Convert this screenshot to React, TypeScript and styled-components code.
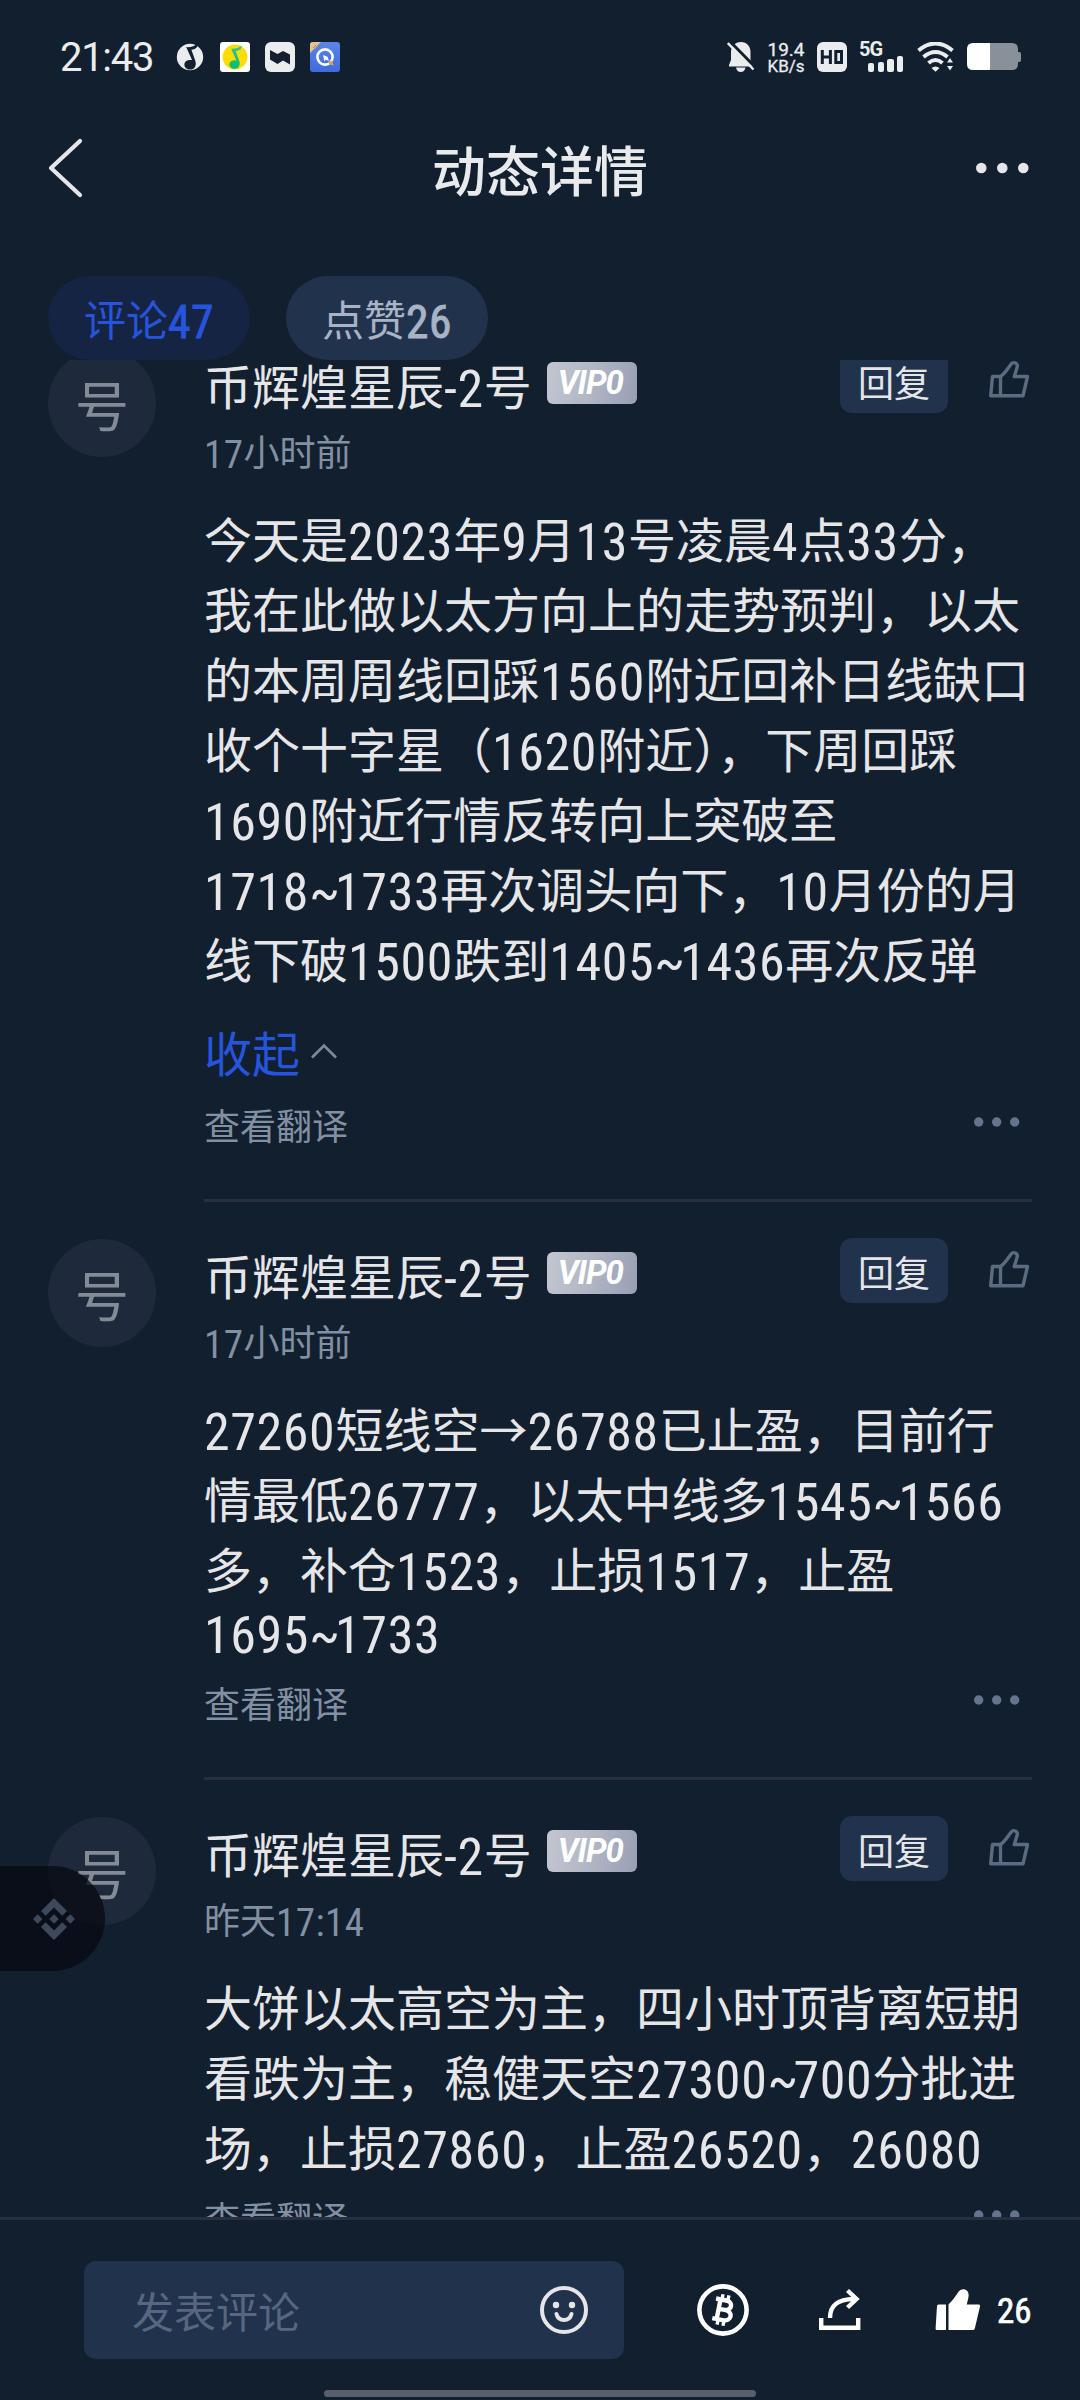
import React from 'react';
import styled, { createGlobalStyle, css } from 'styled-components';

const cjk = `"Noto Sans CJK SC", sans-serif`;
const latin = `"Roboto Condensed", Roboto, "Noto Sans CJK SC", sans-serif`;

const c = {
  bg: '#121f2f',
  panel: '#21324c',
  text: '#e6e6e8',
  muted: '#8290a3',
  icon: '#5b6b82',
  blue: '#2754dc',
  line: '#2a2f40',
};

const GlobalStyle = createGlobalStyle`
  *, *::before, *::after { box-sizing: border-box; }
  body { margin: 0; background: ${c.bg}; }
`;

const Screen = styled.div`
  position: relative;
  display: flex;
  flex-direction: column;
  width: 1080px;
  height: 2400px;
  overflow: hidden;
  background: ${c.bg};
  color: ${c.text};
  font-family: ${cjk};
`;

const Num = styled.span<{ $strong?: boolean; $tight?: boolean }>`
  font-family: ${latin};
  font-size: 1.083em;
  font-weight: 400;
  letter-spacing: ${p => (p.$tight ? '-0.09em' : '0.012em')};
  line-height: 0;
  vertical-align: -0.04em;
  -webkit-text-stroke: ${p => (p.$strong ? '0.9px' : '0')} currentColor;
`;

/* Status bar */
const StatusBar = styled.header`
  display: flex;
  align-items: center;
  justify-content: space-between;
  height: 114px;
  padding: 0 58px 0 60px;
`;

const StatusGroup = styled.div<{ $gap: number }>`
  display: flex;
  align-items: center;
  gap: ${p => p.$gap}px;
`;

const Clock = styled.span`
  width: 100px;
  padding-top: 1px;
  font-family: Roboto, sans-serif;
  font-size: 40px;
  line-height: 40px;
  letter-spacing: -1.3px;
  color: #ebecee;
`;

const NetSpeed = styled.div`
  display: flex;
  flex-direction: column;
  align-items: center;
  width: 36px;
  margin: 0 1px;
  font-family: Roboto, sans-serif;
  color: #ebecee;
  -webkit-text-stroke: 0.3px currentColor;
`;

const Speed = styled.span`
  font-size: 19px;
  line-height: 17px;
`;

const Unit = styled.span`
  font-size: 17px;
  line-height: 16px;
`;

const Signal = styled.div`
  display: flex;
  flex-direction: column;
  width: 46px;
  height: 30px;
`;

const SignalLabel = styled.span`
  height: 14px;
  font-family: Roboto, sans-serif;
  font-weight: 700;
  font-size: 20px;
  line-height: 15px;
  letter-spacing: -1px;
  color: #ebecee;
`;

const SignalBars = styled.div`
  display: flex;
  align-items: flex-end;
  gap: 3.4px;
  height: 16px;
  margin-left: 9px;
`;

const SignalBar = styled.span<{ $h: number }>`
  width: 6.3px;
  height: ${p => p.$h}px;
  border-radius: 2px;
  background: #ebecee;
`;

/* Title bar */
const TitleBar = styled.nav`
  display: grid;
  grid-template-columns: 120px 1fr 120px;
  align-items: center;
  height: 108px;
  padding: 0 45px;
`;

const Title = styled.h1`
  margin: 0;
  text-align: center;
  font-size: 54px;
  font-weight: 500;
  line-height: 107px;
  color: #e9eaec;
`;

const TitleAction = styled.div<{ $end?: boolean }>`
  display: flex;
  justify-content: ${p => (p.$end ? 'flex-end' : 'flex-start')};
  padding-right: ${p => (p.$end ? 5 : 0)}px;
`;

/* Tabs */
const Tabs = styled.div`
  display: flex;
  gap: 36px;
  height: 138px;
  padding: 54px 48px 0;
`;

const Tab = styled.button<{ $active?: boolean }>`
  width: 202px;
  height: 84px;
  padding: 0;
  border: 0;
  border-radius: 42px;
  font-family: ${cjk};
  font-size: 42px;
  line-height: 84px;
  white-space: nowrap;
  ${p =>
    p.$active
      ? css`
          background: #142442;
          color: ${c.blue};
        `
      : css`
          background: ${c.panel};
          color: #a8b3c6;
        `}
`;

/* Comment list */
const Viewport = styled.main`
  height: 1857px;
  overflow: hidden;
`;

const List = styled.div`
  margin-top: -48px;
`;

const Comment = styled.article`
  display: flex;
  gap: 48px;
  padding: 37px 48px 0;
`;

const Avatar = styled.div`
  flex: none;
  width: 108px;
  height: 108px;
  border-radius: 50%;
  background: #1e2a3b;
  color: #848b97;
  font-size: 54px;
  line-height: 109px;
  text-align: center;
`;

const Main = styled.div`
  flex: 1;
  border-bottom: 3px solid ${c.line};
`;

const Head = styled.div`
  display: flex;
  align-items: flex-start;
  height: 64px;
`;

const Name = styled.span`
  padding-top: 3px;
  font-size: 48px;
  line-height: 64px;
  white-space: nowrap;
`;

const Badge = styled.span`
  display: flex;
  align-items: center;
  justify-content: center;
  width: 90px;
  height: 42px;
  margin: 13px auto 0 15px;
  padding-right: 3px;
  border-radius: 6px;
  background: linear-gradient(100deg, #c3c6d0, #b1b6c4 50%, #989fb6);
  color: #fff;
  font-family: Roboto, sans-serif;
  font-size: 33px;
  font-style: italic;
  font-weight: 700;
  letter-spacing: -1px;
  line-height: 42px;
`;

const Reply = styled.button`
  width: 108px;
  height: 65px;
  margin: -1px 38px 0 0;
  padding: 0;
  border: 0;
  border-radius: 12px;
  background: ${c.panel};
  color: ${c.text};
  font-family: ${cjk};
  font-size: 36px;
  line-height: 66px;
`;

const Time = styled.div`
  margin-top: 12px;
  font-size: 36px;
  line-height: 50px;
  color: ${c.muted};
`;

const Body = styled.div`
  margin-top: 27px;
  font-size: 48px;
  white-space: nowrap;
`;

const Line = styled.div<{ $short?: boolean }>`
  height: ${p => (p.$short ? 63 : 70)}px;
  line-height: ${p => (p.$short ? 56 : 70)}px;
`;

const Collapse = styled.div`
  display: flex;
  align-items: center;
  gap: 11px;
  height: 70px;
  margin-top: 24px;
  color: ${c.blue};
  font-size: 48px;
  line-height: 70px;
`;

const Footer = styled.div<{ $after?: boolean }>`
  display: flex;
  align-items: flex-start;
  justify-content: space-between;
  height: 52px;
  margin: ${p => (p.$after ? 12 : 11)}px 12px 49px 0;
  color: ${c.muted};
  font-size: 36px;
  line-height: 52px;
`;

const More = styled.span`
  display: flex;
  padding-top: 17px;
`;

const FloatingTab = styled.div`
  position: absolute;
  left: 0;
  top: 1866px;
  display: flex;
  align-items: center;
  width: 105px;
  height: 105px;
  padding-left: 33px;
  border-radius: 0 53px 53px 0;
  background: rgba(6, 9, 15, 0.72);
`;

/* Bottom bar */
const BottomBar = styled.footer`
  display: flex;
  align-items: flex-start;
  height: 173px;
  padding: 41px 48px 0 84px;
  border-top: 3px solid ${c.line};
`;

const Field = styled.div`
  display: flex;
  align-items: center;
  justify-content: space-between;
  width: 540px;
  height: 98px;
  padding: 0 35px 0 48px;
  border-radius: 12px;
  background: ${c.panel};
  color: #56677f;
  font-size: 42px;
  line-height: 98px;
`;

const Actions = styled.div`
  display: flex;
  flex: 1;
  align-items: center;
  height: 98px;
  padding-left: 72px;
`;

const Likes = styled.div`
  display: flex;
  align-items: center;
  gap: 16px;
  margin-left: 73px;
  color: #fff;
  font-family: ${latin};
  font-size: 35px;
  line-height: 40px;
  -webkit-text-stroke: 0.7px currentColor;
`;

const LikeCount = styled.span`
  padding-top: 3px;
`;

const Share = styled.span`
  display: flex;
  margin-left: 68px;
`;

const HomeBar = styled.div`
  width: 432px;
  height: 7px;
  margin: 0 auto;
  border-radius: 4px;
  background: #565f6b;
`;

function Rich({ text, strong }: { text: string; strong?: boolean }) {
  return (
    <>
      {text.split(/(~|[0-9:\-]+)/).map((part, i) =>
        i % 2 ? (
          <Num key={i} $strong={strong} $tight={part === '~'}>
            {part}
          </Num>
        ) : (
          part
        ),
      )}
    </>
  );
}

function Dots({ gap, r, color }: { gap: number; r: number; color: string }) {
  const w = gap * 2 + r * 2 + 2;
  return (
    <svg width={w} height={14} viewBox={`0 0 ${w} 14`} fill={color}>
      {[0, 1, 2].map(i => (
        <circle key={i} cx={r + 1 + gap * i} cy={7} r={r} />
      ))}
    </svg>
  );
}

const ThumbOutline = () => (
  <svg width="46" height="64" viewBox="0 0 46 64" fill="none" stroke={c.icon} strokeWidth="3.4" strokeLinejoin="round">
    <path d="M6.500 27.500H14.500C19 24.500 22.500 18.500 25 15.200C27.500 12.200 32 14 31.200 18L28.300 27.500H41.500L37 46.800H4.700Z" />
    <path d="M14.500 27.500V46.800" />
  </svg>
);

const MusicNote = ({ fill }: { fill: string }) => (
  <path
    d="M11.200 4.600C15.500 5 20 3.600 22.600 1C23.400 4 21.400 6.600 16.400 7.200L20.300 18.200C22 23.500 19.200 27 15.200 27C11.400 27 9 24.400 9.400 21.400C9.900 18.400 13 16.800 17 17.600Z"
    fill={fill}
  />
);

const comments = [
  {
    time: '17小时前',
    lines: [
      '今天是2023年9月13号凌晨4点33分，',
      '我在此做以太方向上的走势预判，以太',
      '的本周周线回踩1560附近回补日线缺口',
      '收个十字星（1620附近），下周回踩',
      '1690附近行情反转向上突破至',
      '1718~1733再次调头向下，10月份的月',
      '线下破1500跌到1405~1436再次反弹',
    ],
    expanded: true,
  },
  {
    time: '17小时前',
    lines: [
      '27260短线空→26788已止盈，目前行',
      '情最低26777，以太中线多1545~1566',
      '多，补仓1523，止损1517，止盈',
      '1695~1733',
    ],
  },
  {
    time: '昨天17:14',
    lines: [
      '大饼以太高空为主，四小时顶背离短期',
      '看跌为主，稳健天空27300~700分批进',
      '场，止损27860，止盈26520，26080',
    ],
  },
];

export default function App() {
  return (
    <Screen>
      <GlobalStyle />
      <StatusBar>
        <StatusGroup $gap={15}>
          <Clock>21:43</Clock>
          <svg width="30" height="30" viewBox="0 0 30 30">
            <circle cx="15" cy="15" r="13.200" fill="#ebecee" />
            <g transform="translate(0 .5)">
              <MusicNote fill={c.bg} />
            </g>
          </svg>
          <svg width="30" height="30" viewBox="0 0 30 30">
            <defs>
              <linearGradient id="note" x1="0" y1="0" x2="0" y2="1">
                <stop offset="0" stopColor="#2cc9a5" />
                <stop offset="1" stopColor="#0fbb60" />
              </linearGradient>
            </defs>
            <rect width="30" height="30" rx="3" fill="#fff" />
            <circle cx="15" cy="15" r="12.400" fill="#fcdc04" />
            <g transform="translate(1 2.500) scale(.9)">
              <MusicNote fill="url(#note)" />
            </g>
          </svg>
          <svg width="30" height="30" viewBox="0 0 30 30">
            <rect width="30" height="30" rx="6" fill="#ebecee" />
            <path d="M5 8L12.500 12L18 9L25 12.500V22.500L18 18.500L12.500 22L5 17.500Z" fill={c.bg} />
          </svg>
          <svg width="30" height="30" viewBox="0 0 30 30">
            <defs>
              <linearGradient id="blueApp" x1="0" y1="0" x2="0" y2="1">
                <stop offset="0" stopColor="#5b86e8" />
                <stop offset="1" stopColor="#3f6bdc" />
              </linearGradient>
            </defs>
            <rect width="30" height="30" rx="3" fill="url(#blueApp)" />
            <path d="M3 0H11L0 11V3Q0 0 3 0Z" fill="#e8c590" />
            <path d="M3 6L6 3M5 7L8 4" stroke="#a98a5c" strokeWidth="1" />
            <circle cx="15" cy="15" r="7.600" fill="none" stroke="#fff" strokeWidth="2.600" />
            <path d="M13 13L17.500 14.800L19 19L15.800 17.500L14.500 19.500Z" fill="#fff" />
            <path d="M18 20L21.500 18.500L24 23.500L19.500 22.500Z" fill="#d9a35e" />
          </svg>
        </StatusGroup>
        <StatusGroup $gap={12}>
          <svg width="28" height="30" viewBox="0 0 28 30">
            <path d="M14 0C20 0 23.500 4.500 23.500 10V18L26 23V24.500H2V23L4 18V10C4 4.500 8 0 14 0Z" fill="#ebecee" />
            <path d="M9 25.500H18.500Q17.500 30 13.800 30Q10 30 9 25.500Z" fill="#ebecee" />
            <path d="M1.500 -2L29 26" stroke={c.bg} strokeWidth="3" />
            <path d="M0.800 1L26.500 27.500" stroke="#ebecee" strokeWidth="2.400" />
          </svg>
          <NetSpeed>
            <Speed>19.4</Speed>
            <Unit>KB/s</Unit>
          </NetSpeed>
          <svg width="30" height="30" viewBox="0 0 30 30">
            <rect width="30" height="30" rx="6" fill="#ebecee" />
            <path d="M5.300 8V22M5.300 15H13M13.400 8V22M18.800 9.500H24.500V20.500H18.800Z" fill="none" stroke={c.bg} strokeWidth="3" />
          </svg>
          <Signal>
            <SignalLabel>5G</SignalLabel>
            <SignalBars>
              <SignalBar $h={9} />
              <SignalBar $h={10.500} />
              <SignalBar $h={13.500} />
              <SignalBar $h={16.500} />
            </SignalBars>
          </Signal>
          <svg width="38" height="30" viewBox="0 0 38 30" fill="none" stroke="#ebecee" strokeWidth="4">
            <path d="M1.500 8.500Q18.500 -5.500 35.500 8.500" />
            <path d="M6.500 15Q18.500 5 30.500 15" />
            <path d="M11.500 21Q18.500 15 25.500 21" />
            <path d="M14.500 26L18.500 29.800L22.500 26Q18.500 23 14.500 26Z" fill="#ebecee" stroke="none" />
            <path d="M33 15L37 21H29ZM33 29.500L37 23.500H29Z" fill="#ebecee" stroke={c.bg} strokeWidth="1.200" />
          </svg>
          <svg width="55" height="28" viewBox="0 0 55 28">
            <path d="M23 0H45Q51 0 51 6V9H52.500Q54 9 54 11V17Q54 19 52.500 19H51V21Q51 27 45 27H23Z" fill="#8a909a" />
            <path d="M6 0H23V27H6Q0 27 0 21V6Q0 0 6 0Z" fill="#fff" />
          </svg>
        </StatusGroup>
      </StatusBar>

      <TitleBar>
        <TitleAction>
          <svg width="40" height="62" viewBox="0 0 40 62" fill="none" stroke="#e6e6e8" strokeWidth="4.200" strokeLinecap="round" strokeLinejoin="round">
            <path d="M35 4L6 31L35 58" />
          </svg>
        </TitleAction>
        <Title>动态详情</Title>
        <TitleAction $end>
          <Dots gap={21} r={5.300} color="#e6e6e8" />
        </TitleAction>
      </TitleBar>

      <Tabs>
        <Tab $active>
          <Rich text="评论47" strong />
        </Tab>
        <Tab>
          <Rich text="点赞26" strong />
        </Tab>
      </Tabs>

      <Viewport>
        <List>
          {comments.map((item, i) => (
            <Comment key={i}>
              <Avatar>号</Avatar>
              <Main>
                <Head>
                  <Name>
                    <Rich text="币辉煌星辰-2号" />
                  </Name>
                  <Badge>VIP0</Badge>
                  <Reply>回复</Reply>
                  <ThumbOutline />
                </Head>
                <Time>
                  <Rich text={item.time} />
                </Time>
                <Body>
                  {item.lines.map(line => (
                    <Line key={line} $short={/^[0-9~]+$/.test(line)}>
                      <Rich text={line} />
                    </Line>
                  ))}
                </Body>
                {item.expanded && (
                  <Collapse>
                    收起
                    <svg width="26" height="18" viewBox="0 0 26 18" fill="none" stroke="#7d8b9e" strokeWidth="2.600">
                      <path d="M1 15.500L13 3.500L25 15.500" />
                    </svg>
                  </Collapse>
                )}
                <Footer $after={item.expanded}>
                  查看翻译
                  <More>
                    <Dots gap={18} r={4.700} color="#64748e" />
                  </More>
                </Footer>
              </Main>
            </Comment>
          ))}
        </List>
      </Viewport>

      <BottomBar>
        <Field>
          发表评论
          <svg width="50" height="50" viewBox="0 0 50 50" fill="none" stroke="#e6e6e8" strokeWidth="4">
            <circle cx="25" cy="25" r="22" />
            <circle cx="17" cy="20" r="3.200" fill="#e6e6e8" stroke="none" />
            <circle cx="33" cy="20" r="3.200" fill="#e6e6e8" stroke="none" />
            <path d="M17.500 29Q19 35 25 35Q31 35 32.500 29" strokeLinecap="round" />
          </svg>
        </Field>
        <Actions>
          <svg width="54" height="54" viewBox="0 0 54 54" fill="none" stroke="#fff">
            <circle cx="27" cy="27" r="23.600" strokeWidth="4.600" />
            <g transform="rotate(11 27 27)" strokeWidth="4.400">
              <path d="M18 17H28.500C36 17 36 26.500 28.500 26.500H22M28.500 26.500C38 26.500 38 37 28.500 37H18M22.500 17V37" />
              <path d="M24 11.500V17M30 11.500V17M24 37V42.500M30 37V42.500" strokeWidth="3.400" />
            </g>
          </svg>
          <Share>
            <svg width="44" height="46" viewBox="0 0 44 46" fill="none" stroke="#fff" strokeWidth="4.400">
              <path d="M3.200 31V40.800H40.200V31" />
              <path d="M12 31C12 19.500 18 12.300 36 12" />
              <path d="M29.500 3.500L38.500 12L29.500 20.500" />
            </svg>
          </Share>
          <Likes>
            <svg width="46" height="44" viewBox="0 0 46 44" fill="#fff">
              <path d="M3.500 16.500H11V42H2Q0.500 42 0.600 40.500L2 18Q2.100 16.500 3.500 16.500Z" />
              <path d="M13.500 42V16.500C18 12 20.500 8 23 4.500C26.500 -1 34 1 33.600 7.500C33.500 10.500 32.500 13 31.800 16.500H43.500Q45.500 16.500 45 18.500L39.800 40.500Q39.500 42 38 42Z" />
            </svg>
            <LikeCount>26</LikeCount>
          </Likes>
        </Actions>
      </BottomBar>
      <HomeBar />

      <FloatingTab>
        <svg width="42" height="42" viewBox="0 0 42 42" fill="#3d495b">
          <path d="M21 0L34 13L29.300 17.700L21 9.400L12.700 17.700L8 13Z" />
          <path d="M21 42L34 29L29.300 24.300L21 32.600L12.700 24.300L8 29Z" />
          <path d="M21 16.300L25.700 21L21 25.700L16.300 21ZM4.700 16.300L9.400 21L4.700 25.700L0 21ZM37.300 16.300L42 21L37.300 25.700L32.600 21Z" />
        </svg>
      </FloatingTab>
    </Screen>
  );
}
